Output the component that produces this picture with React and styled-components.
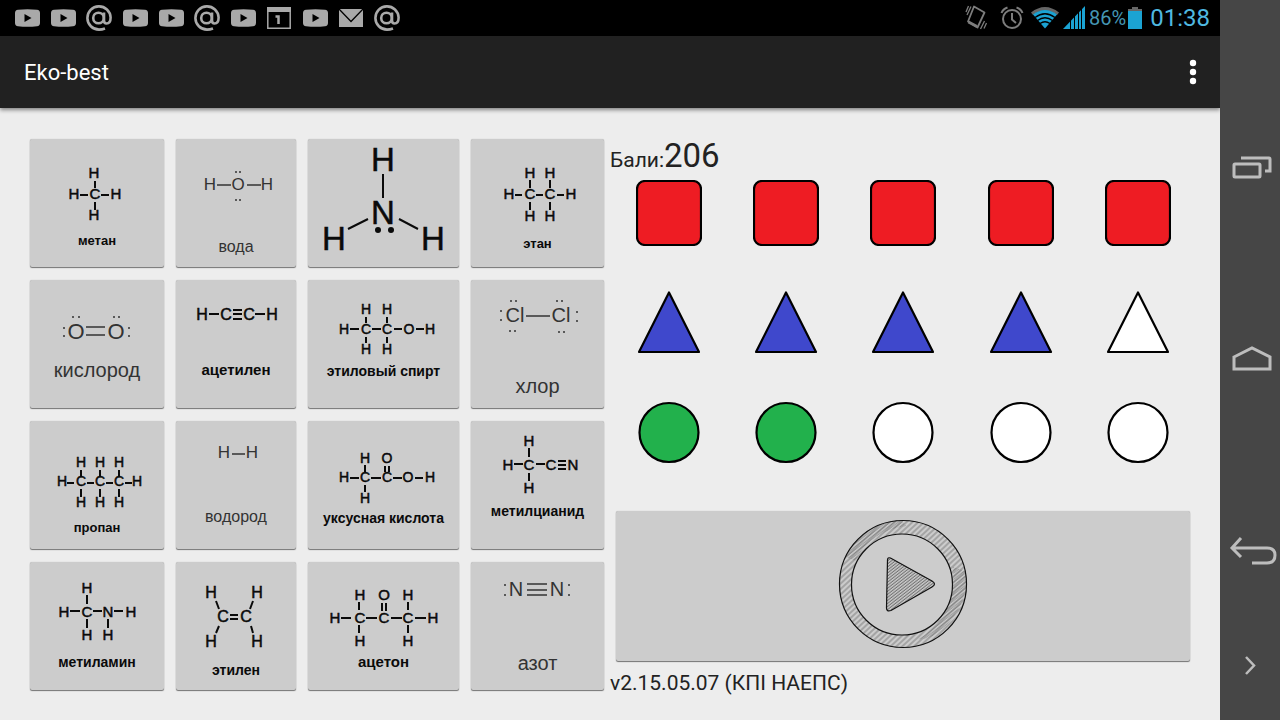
import React from 'react';
import styled, { createGlobalStyle } from 'styled-components';

const GlobalStyle = createGlobalStyle`
  * { box-sizing: border-box; }
  body { margin: 0; background: #ededed; font-family: Roboto, "Noto Sans", sans-serif; }
  button { font: inherit; border: 0; padding: 0; margin: 0; background: none; cursor: pointer; }
  svg { display: block; flex: none; }
`;

const Device = styled.div`
  display: flex;
  min-height: 100vh;
`;

const Screen = styled.div`
  flex: 1;
  min-width: 0;
  display: flex;
  flex-direction: column;
`;

const StatusBar = styled.header`
  display: flex;
  justify-content: space-between;
  align-items: center;
  height: 36px;
  padding: 0 10px 0 9px;
  background: #000;
`;

const Notifications = styled.div`
  display: flex;
  color: #a9a9a9;
`;

const NotificationSlot = styled.span`
  display: flex;
  justify-content: center;
  align-items: center;
  width: 36px;
  height: 36px;
`;

const SystemTray = styled.div`
  display: flex;
  align-items: center;
  color: #7d7d7d;
`;

const Reception = styled.span`
  display: flex;
  gap: 3px;
`;

const BatteryLevel = styled.span`
  font-size: 20px;
  line-height: 36px;
  color: #4596b4;
  margin: 0 2px 0 4px;
`;

const Clock = styled.time`
  font-size: 24px;
  line-height: 36px;
  color: #4fb9e0;
  margin-left: 8px;
`;

const AppBar = styled.div`
  display: flex;
  justify-content: space-between;
  align-items: center;
  height: 72px;
  padding: 0 12px 0 24px;
  background: #212121;
  box-shadow: 0 2px 4px rgba(0, 0, 0, 0.45);
`;

const Title = styled.h1`
  margin: 0;
  font-size: 22px;
  font-weight: 400;
  color: #fff;
`;

const MenuButton = styled.button`
  display: flex;
  justify-content: center;
  align-items: center;
  width: 30px;
  height: 48px;
`;

const Main = styled.main`
  flex: 1;
  display: grid;
  grid-template-columns: 574fr 587fr;
  gap: 6px;
  align-items: start;
  padding: 31px 23px 15px 30px;
`;

const MoleculeGrid = styled.section`
  display: grid;
  grid-template-columns: 134fr 120fr 151fr 133fr;
  gap: 13px 12px;
`;

const Tile = styled.button`
  display: flex;
  flex-direction: column;
  align-items: center;
  min-width: 0;
  height: 128px;
  background: #ccc;
  border-radius: 2px;
  box-shadow: 0 1px 1px rgba(0, 0, 0, 0.5), 0 0 1px rgba(0, 0, 0, 0.25);
`;

const Formula = styled.svg`
  font-family: "Liberation Sans", Arial, sans-serif;
  font-size: ${(p) => p.$size}px;
  text-anchor: middle;
  color: ${(p) => (p.$light ? '#333' : '#0a0a0a')};
  fill: currentColor;

  text {
    stroke: currentColor;
    stroke-width: ${(p) => (p.$light ? 0 : 0.5)};
  }
  path {
    fill: none;
    stroke: currentColor;
    stroke-width: ${(p) => (p.$light ? 1.5 : 2)};
  }
`;

const Caption = styled.span`
  font-family: "Liberation Sans", Arial, sans-serif;
  font-size: ${(p) => p.$size}px;
  font-weight: ${(p) => (p.$light ? 400 : 700)};
  line-height: 20px;
  white-space: nowrap;
  color: ${(p) => (p.$light ? '#333' : '#0a0a0a')};
`;

const Panel = styled.section`
  display: flex;
  flex-direction: column;
`;

const Score = styled.p`
  margin: 0;
  height: 41px;
  line-height: 34px;
  font-size: 21px;
  color: #222;
`;

const Points = styled.strong`
  font-size: 33px;
  font-weight: 400;
`;

const Counters = styled.div`
  display: flex;
  flex-direction: column;
  gap: 44px;
`;

const CounterRow = styled.div`
  display: grid;
  grid-template-columns: repeat(5, 1fr);
  justify-items: center;
`;

const PlayButton = styled.button`
  display: flex;
  justify-content: center;
  height: 150px;
  margin: 45px 7px 0 6px;
  padding-top: 8px;
  background: #ccc;
  border-radius: 2px;
  box-shadow: 0 1px 1px rgba(0, 0, 0, 0.5), 0 0 1px rgba(0, 0, 0, 0.25);
`;

const Version = styled.p`
  margin: 0;
  font-size: 21px;
  line-height: 44px;
  color: #222;
`;

const NavBar = styled.nav`
  display: flex;
  flex-direction: column;
  width: 60px;
  padding: 72px 0 38px;
  background: #464646;
`;

const NavButton = styled.button`
  flex: ${(p) => (p.$compact ? '0 0 34px' : '1')};
  display: flex;
  justify-content: center;
  align-items: center;
  padding-left: ${(p) => (p.$compact ? 0 : 4)}px;
`;

/* Each atom is [symbol, x, y]; bonds is a path; dots are lone electrons. */
const molecules = [
  {
    name: 'метан', w: 134, h: 92, size: 15, text: 13,
    atoms: [['H', 64, 34], ['C', 65, 55], ['H', 44, 55], ['H', 86, 55], ['H', 64, 76]],
    bonds: 'M65 42V49M65 63V71M50 56H58M71 56H79',
  },
  {
    name: 'вода', w: 120, h: 98, size: 17, text: 16, light: true,
    atoms: [['H', 34, 46], ['O', 62, 46], ['H', 91, 46]],
    bonds: 'M41 46H55M71 46H85',
    dots: [[60, 33], [64, 33], [60, 61], [64, 61]],
  },
  {
    w: 151, h: 128, size: 33, label: 'аммиак', dot: 3,
    atoms: [['H', 75, 21], ['N', 75, 74], ['H', 26, 100], ['H', 125, 100]],
    bonds: 'M75 35V59M40 90L60 80M91 80L110 90',
    dots: [[70, 91], [83, 91]],
  },
  {
    name: 'этан', w: 133, h: 95, size: 15, text: 13,
    atoms: [['H', 59, 34], ['H', 79, 34], ['H', 38, 55], ['C', 59, 55], ['C', 79, 55], ['H', 100, 55], ['H', 59, 77], ['H', 79, 77]],
    bonds: 'M59 41V49M79 41V49M59 63V71M79 63V71M44 56H51M65 56H72M86 56H93',
  },
  {
    name: 'кислород', w: 134, h: 80, size: 22, text: 20, light: true,
    atoms: [['O', 46, 52], ['O', 86, 52]],
    bonds: 'M56 47H75M56 55H75',
    dots: [[43, 37], [49, 37], [84, 37], [89, 37], [34, 48], [34, 56], [99, 48], [99, 56]],
  },
  {
    name: 'ацетилен', w: 120, h: 80, size: 16, text: 15,
    atoms: [['H', 26, 35], ['C', 50, 35], ['C', 73, 35], ['H', 96, 35]],
    bonds: 'M33 34H43M57 30H66M57 34H66M57 39H66M79 34H89',
  },
  {
    name: 'этиловый спирт', w: 151, h: 81, size: 14, text: 14,
    atoms: [['H', 58, 30], ['H', 79, 30], ['H', 36, 50], ['C', 58, 50], ['C', 79, 50], ['O', 101, 50], ['H', 122, 50], ['H', 58, 70], ['H', 79, 70]],
    bonds: 'M58 37V43M79 37V43M58 57V63M79 57V63M42 49H51M64 49H73M86 49H94M108 49H116',
  },
  {
    name: 'хлор', w: 133, h: 96, size: 20, text: 20, light: true,
    atoms: [['Cl', 44, 35], ['Cl', 90, 35]],
    bonds: 'M55 36H79',
    dots: [[40, 21], [45, 21], [86, 21], [91, 21], [39, 51], [44, 51], [88, 52], [93, 52], [30, 31], [30, 40], [106, 32], [106, 41]],
  },
  {
    name: 'пропан', w: 134, h: 97, size: 14, text: 13,
    atoms: [['H', 51, 42], ['H', 70, 42], ['H', 89, 42], ['H', 32, 61], ['C', 51, 61], ['C', 70, 61], ['C', 89, 61], ['H', 107, 61], ['H', 51, 82], ['H', 70, 82], ['H', 89, 82]],
    bonds: 'M51 49V56M70 49V56M89 49V56M51 68V76M70 68V76M89 68V76M37 62H44M57 62H64M76 62H83M95 62H102',
  },
  {
    name: 'водород', w: 120, h: 86, size: 17, text: 16, light: true,
    atoms: [['H', 48, 32], ['H', 76, 32]],
    bonds: 'M56 33H69',
  },
  {
    name: 'уксусная кислота', w: 151, h: 87, size: 14, text: 14,
    atoms: [['H', 57, 38], ['O', 79, 38], ['H', 36, 57], ['C', 57, 57], ['C', 79, 57], ['O', 100, 57], ['H', 122, 57], ['H', 57, 78]],
    bonds: 'M57 44V51M57 64V71M77 45V51M81 45V51M42 57H51M63 57H73M85 57H94M107 57H115',
  },
  {
    name: 'метилцианид', w: 133, h: 80, size: 15, text: 14,
    atoms: [['H', 58, 20], ['H', 37, 44], ['C', 58, 44], ['C', 80, 44], ['N', 102, 44], ['H', 58, 67]],
    bonds: 'M58 27V36M58 52V60M43 43H52M65 43H74M87 40H95M87 44H95M87 48H95',
  },
  {
    name: 'метиламин', w: 134, h: 90, size: 15, text: 14,
    atoms: [['H', 57, 26], ['H', 34, 50], ['C', 57, 50], ['N', 78, 50], ['H', 101, 50], ['H', 57, 73], ['H', 78, 73]],
    bonds: 'M57 33V42M57 57V66M78 57V66M40 49H50M63 49H72M84 49H93',
  },
  {
    name: 'этилен', w: 120, h: 98, size: 16, text: 14,
    atoms: [['H', 35, 31], ['H', 81, 31], ['C', 47, 55], ['C', 70, 55], ['H', 35, 80], ['H', 81, 80]],
    bonds: 'M40 39L43 47M77 39L74 47M43 64L40 71M75 64L77 71M54 53H62M54 57H62',
  },
  {
    name: 'ацетон', w: 151, h: 90, size: 15, text: 15,
    atoms: [['H', 52, 33], ['O', 76, 33], ['H', 100, 33], ['H', 27, 56], ['C', 52, 56], ['C', 76, 56], ['C', 100, 56], ['H', 125, 56], ['H', 52, 79], ['H', 100, 79]],
    bonds: 'M51 40V48M74 41V49M78 41V49M100 40V48M51 63V71M100 63V71M33 56H43M58 56H69M83 56H94M107 56H118',
  },
  {
    name: 'азот', w: 133, h: 91, size: 20, text: 20, light: true,
    atoms: [['N', 45, 27], ['N', 86, 27]],
    bonds: 'M56 22H76M56 28H76M56 33H76',
    dots: [[34, 23], [34, 33], [98, 23], [98, 33]],
  },
];

function Molecule({ m }) {
  return (
    <Tile type="button" aria-label={m.label}>
      <Formula width={m.w} height={m.h} viewBox={`0 0 ${m.w} ${m.h}`} $size={m.size} $light={m.light} aria-hidden="true">
        <path d={m.bonds} />
        {m.atoms.map(([s, x, y]) => (
          <text key={`${x}-${y}`} x={x} y={y + Math.floor(m.size * 0.35)}>{s}</text>
        ))}
        {(m.dots || []).map(([x, y]) => (
          <circle key={`${x}-${y}`} cx={x} cy={y} r={m.dot || 1} />
        ))}
      </Formula>
      {m.name && <Caption $size={m.text} $light={m.light}>{m.name}</Caption>}
    </Tile>
  );
}

const notificationIcons = {
  video: (
    <svg width="25" height="18" viewBox="0 0 25 18">
      <path fill="currentColor" fillRule="evenodd" d="M3 .7Q12.500-.3 22 .7 25 1 25 4V14Q25 17 22 17.300 12.500 18.300 3 17.300 0 17 0 14V4Q0 1 3 .7ZM9.500 5V13L16.500 9Z" />
    </svg>
  ),
  mail: (
    <svg width="26" height="26" viewBox="0 0 26 26" fill="none" stroke="currentColor" strokeWidth="2.600">
      <circle cx="12.500" cy="13" r="5.300" />
      <path d="M18 7.500V15.500Q18 18.500 20.500 18.500 24.600 18.500 24.600 12.500A11.600 11.600 0 1 0 13 24.600Q16 24.600 19 23.500" />
    </svg>
  ),
  calendar: (
    <svg width="24" height="22" viewBox="0 0 24 22" fill="none" stroke="currentColor">
      <path strokeWidth="1.500" d="M.8 1V21.200H23.200V1" />
      <path strokeWidth="5" d="M0 2.500H24" />
      <path strokeWidth="2.500" d="M8.500 9.500H11.500V17" />
    </svg>
  ),
  envelope: (
    <svg width="24" height="18" viewBox="0 0 24 18">
      <path fill="currentColor" d="M0 0H24V18H0Z" />
      <path fill="none" stroke="#000" strokeWidth="1.300" d="M0 0L12 12.500 24 0" />
    </svg>
  ),
};

const notifications = ['video', 'video', 'mail', 'video', 'video', 'mail', 'video', 'calendar', 'video', 'envelope', 'mail'];

const VibrateIcon = () => (
  <svg width="24" height="26" viewBox="0 0 24 26" fill="none" stroke="currentColor" strokeWidth="1.300">
    <path d="M10 1.500L20.500 7.500 13.500 22.500 4 16.500Z" strokeLinejoin="round" strokeWidth="1.800" />
    <path d="M4.500 17L13 21.500" strokeWidth="3" />
    <path d="M4.500 1L2 7M7 1.500L3 10M20.500 16L16.500 24M22.500 18L20 23.500" />
  </svg>
);

const AlarmIcon = () => (
  <svg width="24" height="24" viewBox="0 0 24 24" fill="none" stroke="currentColor" strokeWidth="2">
    <circle cx="12" cy="13" r="9" />
    <path d="M12 7V13.500L16 17M1.500 7Q3 3 7.500 1.500M22.500 7Q21 3 16.500 1.500" />
  </svg>
);

const WifiIcon = () => (
  <svg width="30" height="24" viewBox="0 0 30 24">
    <path fill="#666" d="M1 6.500Q15-4.500 29 6.500L27 9Q15 0 3 9Z" />
    <path fill="#1ba3d3" d="M3 8.500Q15-.5 27 8.500L15 22.500Z" />
    <path fill="none" stroke="#000" strokeWidth="1.400" d="M5 11.500Q15 4 25 11.500M7.500 14.500Q15 9 22.500 14.500M10 17.500Q15 14 20 17.500" />
  </svg>
);

const SignalIcon = () => (
  <svg width="22" height="24" viewBox="0 0 22 24">
    <path fill="#1ba3d3" d="M22 0V23H0Z" />
    <path fill="none" stroke="#000" d="M7.500 10V24M11.500 8V24M15.500 5V24M18.500 0V24" />
  </svg>
);

const BatteryIcon = () => (
  <svg width="14" height="22" viewBox="0 0 14 22">
    <path fill="#666" d="M4 0H10V2H14V6H0V2H4Z" />
    <path fill="#1ba3d3" d="M0 4H14V22H0Z" />
  </svg>
);

const shapes = {
  square: <rect x="2" y="2" width="64" height="64" rx="8" />,
  triangle: <path d="M34 3.500L64 63H4Z" strokeLinejoin="round" />,
  circle: <circle cx="34" cy="33.500" r="29.500" />,
};

const counters = [
  { shape: 'square', color: '#ee1c23', filled: 5 },
  { shape: 'triangle', color: '#3f48cc', filled: 4 },
  { shape: 'circle', color: '#22b14c', filled: 2 },
];

const PlayIcon = () => (
  <svg width="130" height="130" viewBox="0 0 130 130" fill="none" stroke="#111">
    <defs>
      <pattern id="hatch" width="4" height="4" patternUnits="userSpaceOnUse" patternTransform="rotate(47)">
        <path d="M1 0V4" stroke="#444" strokeWidth="0.600" />
      </pattern>
      <pattern id="fine" width="2.400" height="2.400" patternUnits="userSpaceOnUse" patternTransform="rotate(52)">
        <path d="M1 0V2.400" stroke="#444" strokeWidth="0.700" />
      </pattern>
    </defs>
    <path fill="url(#hatch)" fillRule="evenodd" stroke="none" d="M65 1A64 64 0 1 1 65 129A64 64 0 1 1 65 1ZM64 15A50.500 50.500 0 1 0 64 116A50.500 50.500 0 1 0 64 15Z" />
    <path fill="url(#fine)" stroke="none" d="M8 38Q26 2 64 1L68 7Q32 12 17 42ZM104 96Q118 80 115 48L127 52Q132 82 107 108 92 122 80 120 96 112 104 96Z" opacity="0.500" />
    <circle cx="65" cy="65" r="63.500" strokeWidth="1.200" />
    <circle cx="64" cy="65.500" r="50.500" strokeWidth="1.200" />
    <path fill="url(#fine)" strokeWidth="1.200" d="M49.500 41Q49.500 38 52.500 39L94 62Q99 65 94 68L53 91.500Q48.500 93 48.500 89Z" />
  </svg>
);

const navItems = [
  { label: 'Recent apps', path: 'M2 12V23Q2 24 3 24H27Q28 24 28 23V12Q28 11 27 11H3Q2 11 2 12ZM9 5H37Q38 5 38 6V18H33', w: 41, h: 30 },
  { label: 'Home', path: 'M2 12L20 3 38 12V24H2Z', w: 41, h: 30 },
  { label: 'Back', path: 'M13 1L4 11 13 20M4 11H39Q47 11 47 18 47 26 39 26H24', w: 49, h: 30 },
  { label: 'Hide navigation', path: 'M1 1L9 9.500 1 18', w: 11, h: 19, compact: true },
];

export default function App() {
  return (
    <Device>
      <GlobalStyle />
      <Screen>
        <StatusBar>
          <Notifications>
            {notifications.map((kind, i) => (
              <NotificationSlot key={i}>{notificationIcons[kind]}</NotificationSlot>
            ))}
          </Notifications>
          <SystemTray>
            <NotificationSlot><VibrateIcon /></NotificationSlot>
            <NotificationSlot><AlarmIcon /></NotificationSlot>
            <Reception>
              <WifiIcon />
              <SignalIcon />
            </Reception>
            <BatteryLevel>86%</BatteryLevel>
            <BatteryIcon />
            <Clock>01:38</Clock>
          </SystemTray>
        </StatusBar>
        <AppBar>
          <Title>Eko-best</Title>
          <MenuButton type="button" aria-label="Menu">
            <svg width="8" height="26" viewBox="0 0 8 26" fill="#fff">
              <circle cx="4" cy="4" r="3.200" />
              <circle cx="4" cy="13" r="3.200" />
              <circle cx="4" cy="22" r="3.200" />
            </svg>
          </MenuButton>
        </AppBar>
        <Main>
          <MoleculeGrid>
            {molecules.map((m) => <Molecule key={m.name || m.label} m={m} />)}
          </MoleculeGrid>
          <Panel>
            <Score>Бали:<Points>206</Points></Score>
            <Counters>
              {counters.map(({ shape, color, filled }) => (
                <CounterRow key={shape}>
                  {[0, 1, 2, 3, 4].map((i) => (
                    <svg key={i} width="66" height="66" viewBox="1 1 66 66" fill={i < filled ? color : '#fff'} stroke="#000" strokeWidth="2.200">
                      {shapes[shape]}
                    </svg>
                  ))}
                </CounterRow>
              ))}
            </Counters>
            <PlayButton type="button" aria-label="Play"><PlayIcon /></PlayButton>
            <Version>v2.15.05.07 (КПІ НАЕПС)</Version>
          </Panel>
        </Main>
      </Screen>
      <NavBar>
        {navItems.map((item) => (
          <NavButton key={item.label} type="button" aria-label={item.label} $compact={item.compact}>
            <svg width={item.w} height={item.h} viewBox={`0 0 ${item.w} ${item.h}`} fill="none" stroke="#bdbdbd" strokeWidth={item.compact ? 2.5 : 3}>
              <path d={item.path} />
            </svg>
          </NavButton>
        ))}
      </NavBar>
    </Device>
  );
}
